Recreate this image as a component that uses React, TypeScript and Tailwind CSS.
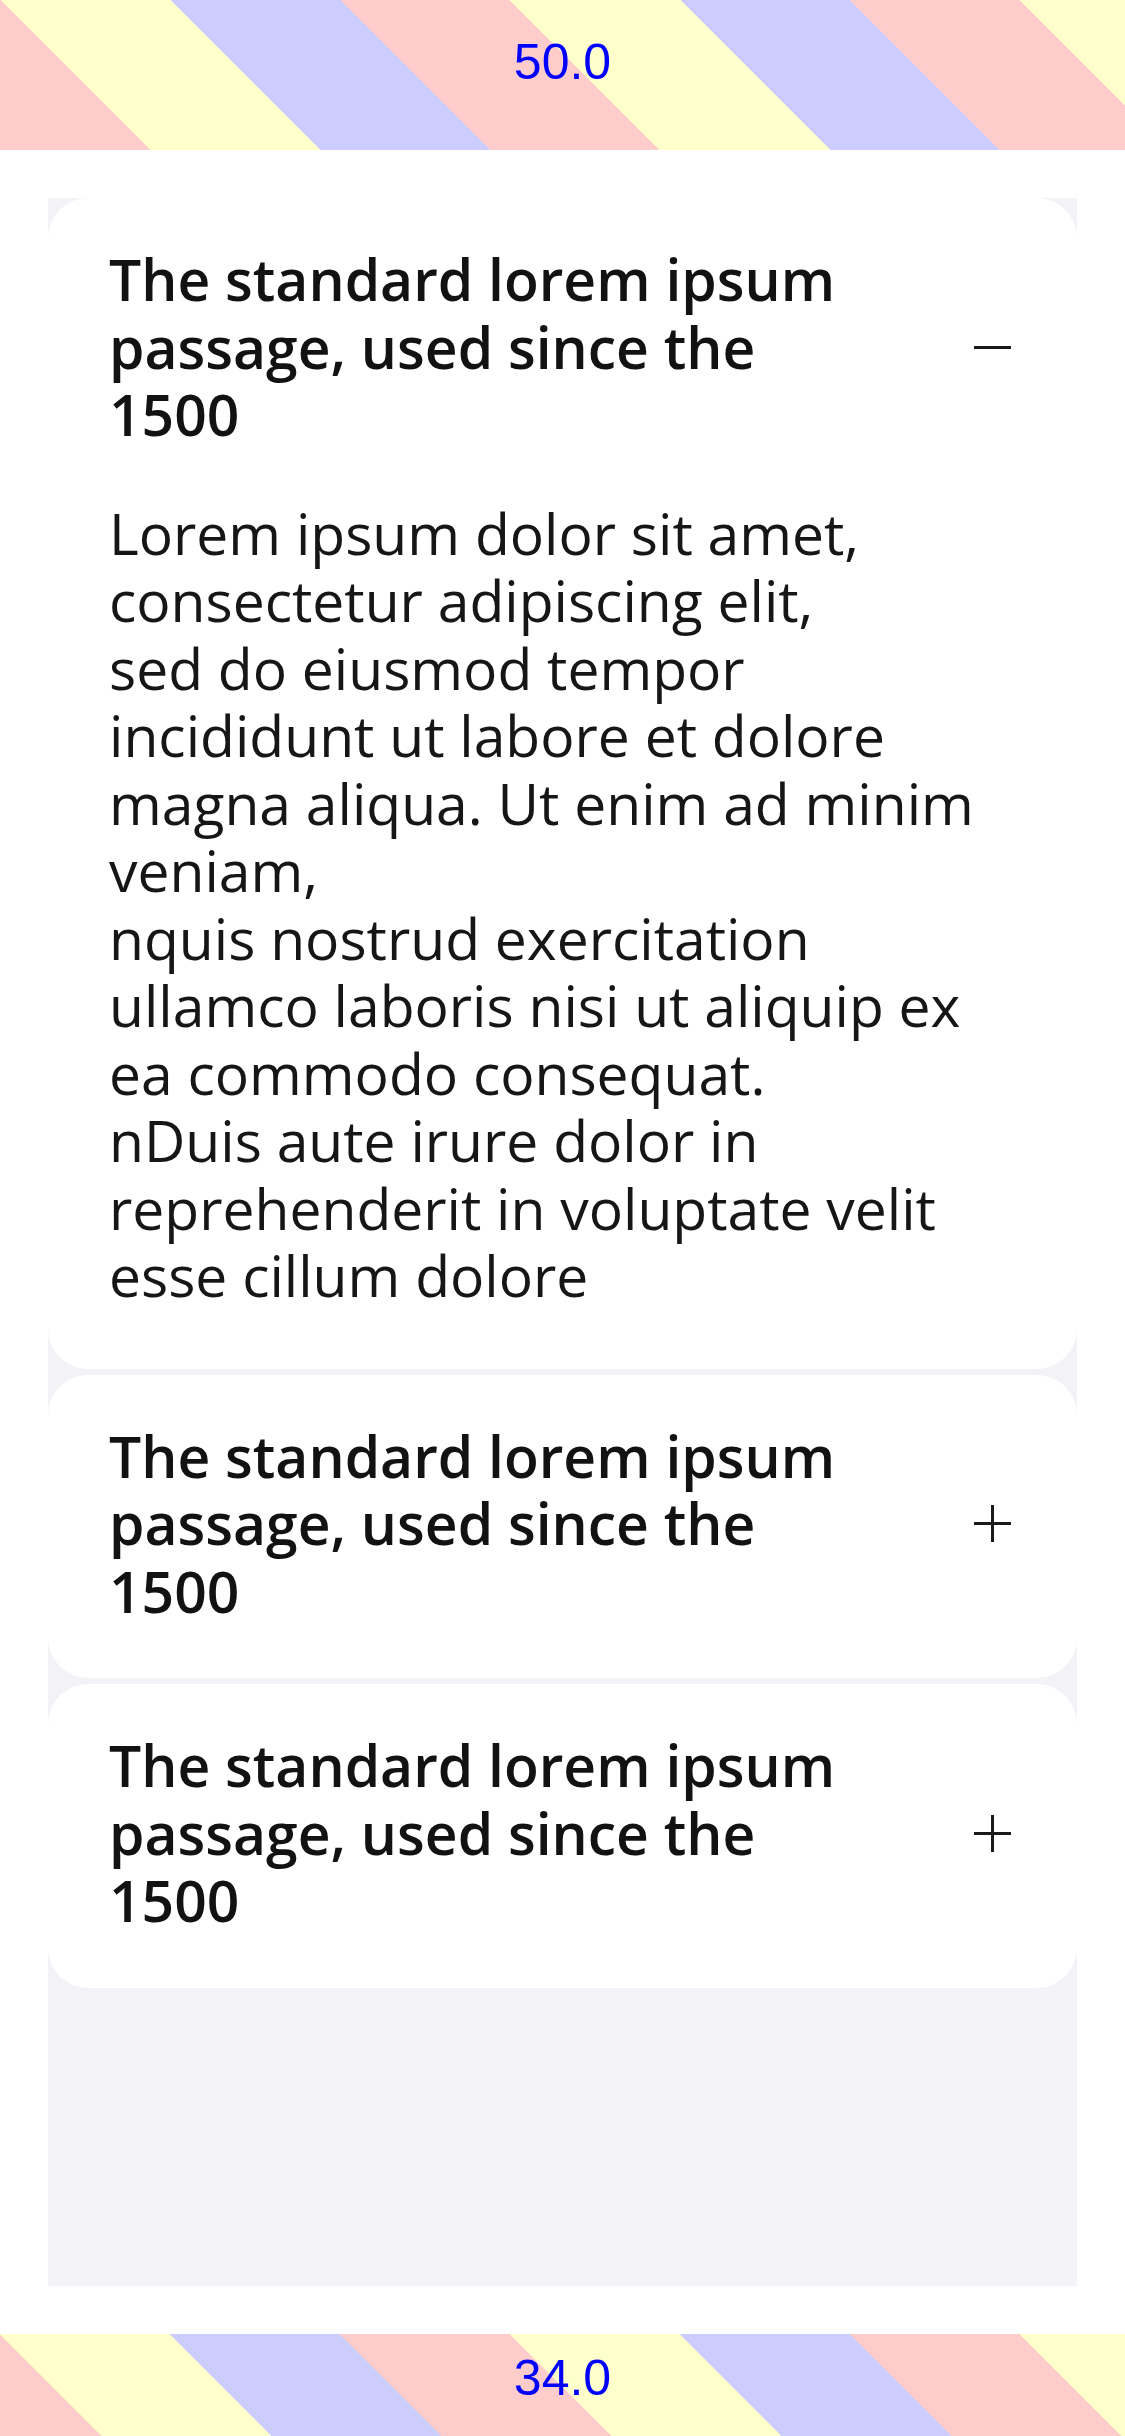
import React from "react";

const headingLines = ["The standard lorem ipsum", "passage, used since the", "1500"];

const bodyLines = [
  "Lorem ipsum dolor sit amet,",
  "consectetur adipiscing elit,",
  "sed do eiusmod tempor",
  "incididunt ut labore et dolore",
  "magna aliqua. Ut enim ad minim",
  "veniam,",
  "nquis nostrud exercitation",
  "ullamco laboris nisi ut aliquip ex",
  "ea commodo consequat.",
  "nDuis aute irure dolor in",
  "reprehenderit in voluptate velit",
  "esse cillum dolore",
];

function Lines({ lines }: { lines: string[] }) {
  return (
    <>
      {lines.map((l, i) => (
        <React.Fragment key={i}>
          {l}
          {i < lines.length - 1 && <br />}
        </React.Fragment>
      ))}
    </>
  );
}

function Icon({ open }: { open: boolean }) {
  return (
    <svg width="37" height="37" viewBox="0 0 37 37" className="shrink-0">
      <line x1="0" y1="18.5" x2="37" y2="18.5" stroke="#1a1a1a" strokeWidth="3" />
      {!open && <line x1="18.5" y1="0" x2="18.5" y2="37" stroke="#1a1a1a" strokeWidth="3" />}
    </svg>
  );
}

function Card({ open }: { open: boolean }) {
  return (
    <div className="bg-white rounded-[40px]">
      <div className="flex items-center justify-between pl-[61px] pr-[66px] pt-[48px] pb-[53px]">
        <p className="whitespace-nowrap font-['Open_Sans',sans-serif] font-semibold text-[57px] leading-[67.5px] text-[#121212]">
          <Lines lines={headingLines} />
        </p>
        <Icon open={open} />
      </div>
      {open && (
        <p className="-mt-[2px] pl-[61px] pr-[40px] pb-[59px] whitespace-nowrap font-['Open_Sans',sans-serif] text-[57px] leading-[67.5px] text-[#161616]">
          <Lines lines={bodyLines} />
        </p>
      )}
    </div>
  );
}

export default function App() {
  return (
    <div className="w-[1125px] h-[2436px] flex flex-col bg-white">
      <div className="h-[150px] shrink-0 pt-[34px] text-center font-['Liberation_Sans',Arial,sans-serif] text-[50px] leading-[57.5px] text-[#0000ff] bg-[repeating-linear-gradient(45deg,#ffcccc_0px,#ffcccc_106.07px,#ffffcc_106.07px,#ffffcc_226.3px,#ccccff_226.3px,#ccccff_346.5px,#ffcccc_346.5px,#ffcccc_360.6px)]">
        50.0
      </div>
      <div className="flex-1 flex flex-col p-[48px]">
        <div className="flex-1 bg-[#f2f2f7] flex flex-col gap-[6px]">
          <Card open={true} />
          <Card open={false} />
          <Card open={false} />
        </div>
      </div>
      <div className="h-[102px] shrink-0 pt-[16px] text-center font-['Liberation_Sans',Arial,sans-serif] text-[50px] leading-[57.5px] text-[#0000ff] bg-[repeating-linear-gradient(45deg,#ffcccc_0px,#ffcccc_72.12px,#ffffcc_72.12px,#ffffcc_192.3px,#ccccff_192.3px,#ccccff_312.5px,#ffcccc_312.5px,#ffcccc_360.6px)]">
        34.0
      </div>
    </div>
  );
}
